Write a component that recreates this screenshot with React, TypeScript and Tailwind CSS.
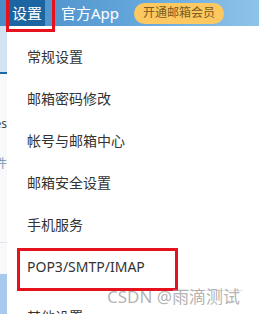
import React from "react";

const items = [
  "常规设置",
  "邮箱密码修改",
  "帐号与邮箱中心",
  "邮箱安全设置",
  "手机服务",
  "POP3/SMTP/IMAP",
  "其他设置",
];

export default function App() {
  return (
    <div className="relative w-[259px] h-[314px] overflow-hidden bg-white font-['Noto_Sans','Noto_Sans_CJK_SC',sans-serif]">
      {/* top bar */}
      <div className="h-[26px] flex items-stretch pl-[9px] bg-[linear-gradient(90deg,#4a8cc5_0%,#62a5da_50%,#8ec3e9_100%)]">
        <div className="px-[3px] bg-[#1b65a3] text-white text-[15px] flex items-center leading-none">设置</div>
        <div className="ml-[16px] text-white text-[15px] flex items-center leading-none">官方App</div>
        <div className="ml-[15px] self-center h-[21px] px-[9px] rounded-full bg-[#fcc85f] text-[#7a5a22] text-[12px] flex items-center leading-none">
          开通邮箱会员
        </div>
      </div>

      {/* body */}
      <div className="flex h-[288px]">
        {/* left strip (page behind) */}
        <div className="w-[7px] flex flex-col overflow-hidden">
          <div className="h-[46px] bg-[#d2e4f3]" />
          <div className="h-[2px] bg-[#1d67a5]" />
          <div className="h-[44px] bg-[#f8f9fb]" />
          <div className="h-[12px] bg-[#f8f9fb] flex justify-end text-[12px] leading-[12px] text-[#444] whitespace-nowrap">ges</div>
          <div className="h-[28px] bg-[#f8f9fb]" />
          <div className="h-[12px] bg-[#f8f9fb] flex justify-end text-[12px] leading-[12px] text-[#7a9ab8] whitespace-nowrap">邮件</div>
          <div className="h-[72px] bg-[#f8f9fb]" />
          <div className="h-[1px] bg-[#e2e4e8]" />
          <div className="h-[31px] bg-[#f8f9fb]" />
          <div className="flex-1 bg-[#a7c9ee]" />
        </div>

        {/* dropdown */}
        <div className="flex-1 bg-white pt-[9px]">
          {items.map((t, i) => (
            <div key={t} className={i === 6 ? "relative mt-[8px]" : "relative"}>
              <div className="h-[42px] flex items-center pl-[20px] text-[14px] text-[#333] whitespace-nowrap">{t}</div>
              {i === 5 && <div className="absolute left-[20px] right-[16px] bottom-[-4px] h-[1px] bg-[#e6e6e6]" />}
            </div>
          ))}
        </div>
      </div>

      {/* red highlight boxes */}
      <div className="absolute left-[6px] top-[-3px] w-[49px] h-[35px] border-[3px] border-[#e5121d]" />
      <div className="absolute left-[17px] top-[248px] w-[161px] h-[43px] border-[3px] border-[#e5121d]" />

      {/* watermark */}
      <div className="absolute left-[107px] top-[287px] text-[17px] leading-[20px] text-[#a0a0a0]/80 whitespace-nowrap">CSDN @雨滴测试</div>
    </div>
  );
}
